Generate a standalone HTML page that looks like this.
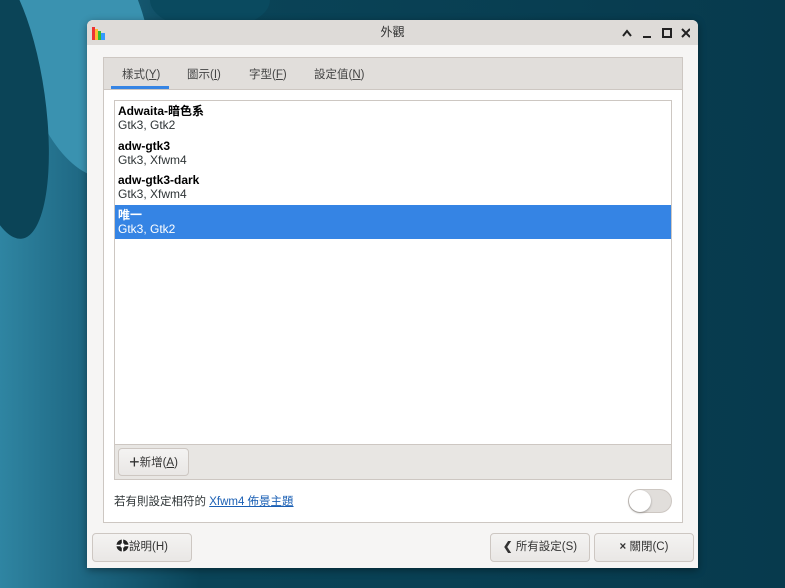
<!DOCTYPE html>
<html><head><meta charset="utf-8"><style>
*{box-sizing:border-box;margin:0;padding:0}
body{width:785px;height:588px;overflow:hidden;position:relative;background:linear-gradient(90deg,#2f85a2 0px,#1d6580 90px,#0a4458 200px,#073a4d 100%);font-family:"Liberation Sans","Noto Sans CJK TC",sans-serif;font-size:12px;color:#2e3436}
.blob{position:absolute;border-radius:50%}
.win{position:absolute;left:87px;top:20px;width:611px;height:548px;background:#f6f5f4;border-radius:6px 6px 0 0;overflow:hidden;box-shadow:0 2px 8px rgba(0,0,0,.4)}
.title{height:25px;background:#dedbd8;position:relative;text-align:center;line-height:25px;font-size:12px;color:#333}
.nb{position:absolute;left:16px;top:37px;width:580px;height:466px;border:1px solid #cdc7c2;background:#fff}
.tabs{height:32px;background:#e1dedb;border-bottom:1px solid #cdc7c2;position:relative}
.tab{position:absolute;top:8px;font-size:11.5px;color:#444}
.list{position:absolute;left:10px;top:42px;width:558px;height:380px;border:1px solid #cdc7c2;background:#fff}
.it{padding:3px 3px 0;height:34.5px;line-height:14px}
.it b{font-size:12px;color:#000}
.sel{background:#3584e4;color:#fff}.sel b{color:#fff}
.tb{position:absolute;left:0;bottom:0;width:100%;height:35px;background:#e8e6e3;border-top:1px solid #cdc7c2}
.btn{position:absolute;border:1px solid #cdc7c2;border-radius:4px;background:linear-gradient(#f4f3f2,#e9e7e5);font-size:11.5px;text-align:center;color:#333}
u{text-decoration:underline}
</style></head><body>
<div class="blob" style="left:20px;top:-80px;width:130px;height:260px;background:#3a92b0;transform:rotate(-12deg)"></div>
<div class="blob" style="left:-40px;top:-40px;width:85px;height:280px;background:#0b4457;transform:rotate(-8deg)"></div>
<div class="blob" style="left:150px;top:-30px;width:120px;height:60px;background:#0a4a5f"></div>
<div class="win">
<div class="title">
<svg style="position:absolute;left:3px;top:4px" width="18" height="18"><rect x="2" y="3" width="3" height="13" fill="#e33"/><rect x="5" y="5" width="3" height="11" fill="#fb3"/><rect x="8" y="7" width="3" height="9" fill="#3b3"/><rect x="11" y="9" width="4" height="7" fill="#39f"/></svg>
外觀
<svg style="position:absolute;left:533px;top:7px" width="70" height="12" stroke="#222" stroke-width="2" fill="none"><path d="M3 9 L7 4 L11 9"/><path d="M23 10 H31"/><rect x="43" y="2" width="8" height="8"/><path d="M62 2 L70 10 M70 2 L62 10"/></svg>
</div>
<div class="nb">
<div class="tabs">
<span class="tab" style="left:18px">樣式(<u>Y</u>)</span>
<div style="position:absolute;left:7px;top:28px;width:58px;height:3px;background:#3584e4"></div>
<span class="tab" style="left:83px">圖示(<u>I</u>)</span>
<span class="tab" style="left:145px">字型(<u>F</u>)</span>
<span class="tab" style="left:210px">設定值(<u>N</u>)</span>
</div>
<div class="list">
<div class="it"><b>Adwaita-暗色系</b><br>Gtk3, Gtk2</div>
<div class="it"><b>adw-gtk3</b><br>Gtk3, Xfwm4</div>
<div class="it"><b>adw-gtk3-dark</b><br>Gtk3, Xfwm4</div>
<div class="it sel"><b>唯一</b><br>Gtk3, Gtk2</div>
<div class="tb"><div class="btn" style="left:3px;top:3px;width:71px;height:28px;line-height:26px;font-size:11.5px"><span style="font-size:18px;vertical-align:-2px">+</span>新增(<u>A</u>)</div></div>
</div>
<div style="position:absolute;left:10px;top:435px;font-size:11.5px">若有則設定相符的 <span style="color:#1a5fb4;text-decoration:underline">Xfwm4 佈景主題</span></div>
<div style="position:absolute;left:524px;top:431px;width:44px;height:24px;border-radius:12px;background:#e1dedb;border:1px solid #cdc7c2"><div style="position:absolute;left:0;top:0;width:22px;height:22px;border-radius:50%;background:#fff;box-shadow:0 1px 2px rgba(0,0,0,.3)"></div></div>
</div>
<div class="btn" style="left:5px;top:513px;width:100px;height:29px;line-height:27px">
<svg width="13" height="13" style="vertical-align:-2px" viewBox="0 0 14 14"><circle cx="7" cy="7" r="6.5" fill="#222"/><circle cx="7" cy="7" r="2.5" fill="#fff"/><path d="M7 0.5V4.5M7 9.5V13.5M0.5 7H4.5M9.5 7H13.5" stroke="#fff" stroke-width="1.5"/></svg>說明(H)</div>
<div class="btn" style="left:403px;top:513px;width:100px;height:29px;line-height:27px"><span style="font-weight:bold">❮</span> 所有設定(S)</div>
<div class="btn" style="left:507px;top:513px;width:100px;height:29px;line-height:27px"><b>×</b> 關閉(C)</div>
</div>
</body></html>
